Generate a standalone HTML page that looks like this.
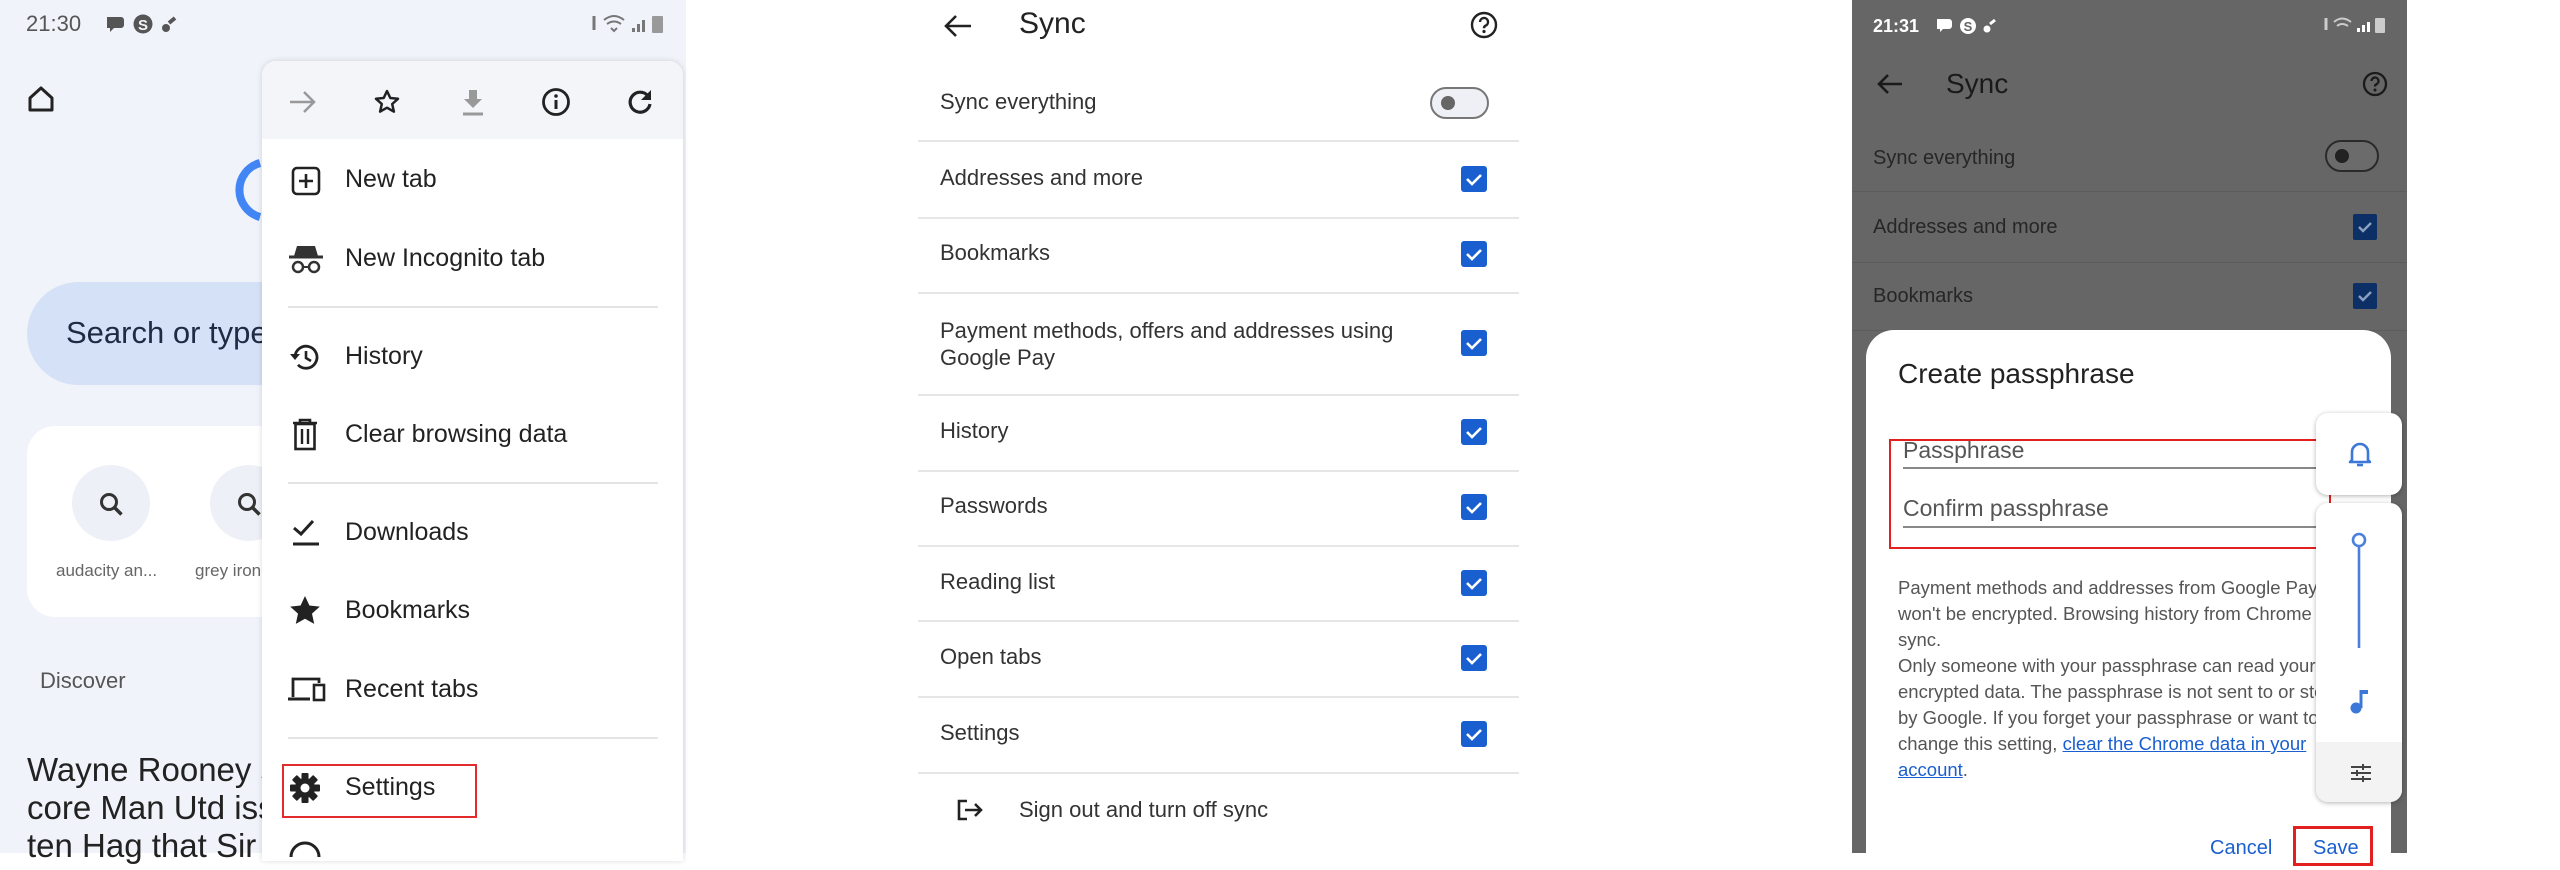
<!DOCTYPE html>
<html><head><meta charset="utf-8"><style>
*{margin:0;padding:0;box-sizing:border-box}
body{width:2560px;height:853px;overflow:hidden;background:#fff;font-family:"Liberation Sans",sans-serif;position:relative}
.a{position:absolute;white-space:nowrap;line-height:1}
svg{position:absolute;overflow:visible}
</style></head><body>

<!-- PANEL 1 -->
<div class="a" style="left:0;top:0;width:686px;height:853px;background:#f0f3fa"></div>
<div class="a" style="left:26px;top:13px;font-size:22px;color:#555">21:30</div>
<svg style="left:105px;top:14px" width="80" height="22"><path d="M2 3h14a3 3 0 0 1 3 3v5a3 3 0 0 1-3 3H9l-4 4v-4H2z" fill="#555"/><circle cx="38" cy="10" r="9.5" fill="#555"/><text x="38" y="16" font-size="15" fill="#f0f3fa" text-anchor="middle" font-family="Liberation Sans" font-weight="bold">S</text><circle cx="61" cy="14" r="4" fill="#555"/><path d="M64 9l6-5" stroke="#555" stroke-width="4"/></svg>
<svg style="left:590px;top:12px" width="80" height="24"><path d="M4 4v14" stroke="#777" stroke-width="3"/><path d="M14 8q10-8 20 0M17 12q7-5 14 0M21 16l3 3 3-3" stroke="#777" stroke-width="2" fill="none"/><path d="M42 20h3v-4h-3zM47 20h3v-8h-3zM52 20h3v-12h-3z" fill="#777"/><rect x="62" y="4" width="11" height="17" rx="1" fill="#999"/></svg>
<svg style="left:26px;top:84px" width="30" height="30"><path d="M4 14L15 4l11 10v12H4z" fill="none" stroke="#222" stroke-width="3" stroke-linejoin="round"/></svg>
<svg style="left:230px;top:160px" width="40" height="60"><path d="M30 3a28 28 0 0 0 0 54" fill="none" stroke="#4285f4" stroke-width="8"/></svg>
<div class="a" style="left:27px;top:282px;width:320px;height:103px;border-radius:52px;background:#d5e1f6"></div>
<div class="a" style="left:66px;top:317px;font-size:31px;color:#1f2a44">Search or type</div>
<div class="a" style="left:27px;top:426px;width:320px;height:191px;border-radius:28px;background:#fff"></div>
<div class="a" style="left:72px;top:465px;width:78px;height:76px;border-radius:50%;background:#edf0f6"></div>
<div class="a" style="left:210px;top:465px;width:78px;height:76px;border-radius:50%;background:#edf0f6"></div>
<svg style="left:98px;top:491px" width="28" height="28"><circle cx="11" cy="11" r="7.5" fill="none" stroke="#333" stroke-width="3"/><path d="M16.5 16.5l7 7" stroke="#333" stroke-width="3.5"/></svg>
<svg style="left:236px;top:491px" width="28" height="28"><circle cx="11" cy="11" r="7.5" fill="none" stroke="#333" stroke-width="3"/><path d="M16.5 16.5l7 7" stroke="#333" stroke-width="3.5"/></svg>
<div class="a" style="left:56px;top:562px;font-size:17px;color:#666">audacity an...</div>
<div class="a" style="left:195px;top:562px;font-size:17px;color:#666">grey iron</div>
<div class="a" style="left:40px;top:670px;font-size:22px;color:#555">Discover</div>
<div class="a" style="left:27px;top:751px;font-size:33px;color:#222;line-height:38px">Wayne Rooney s<br>core Man Utd iss<br>ten Hag that Sir</div>

<!-- menu -->
<div class="a" style="left:262px;top:61px;width:421px;height:800px;background:#fff;border-radius:14px 14px 0 0;box-shadow:0 0 6px rgba(0,0,0,.15);overflow:hidden">
 <div style="height:78px;background:#f4f5f9"></div>
</div>
<svg style="left:288px;top:89px" width="30" height="26"><path d="M2 13h24M16 3l10 10-10 10" fill="none" stroke="#999" stroke-width="2.5"/></svg>
<svg style="left:373px;top:88px" width="28" height="28"><path d="M14 3l3.3 7 7.7.8-5.8 5.2 1.7 7.6L14 19.7l-6.9 3.9 1.7-7.6L3 10.8l7.7-.8z" fill="none" stroke="#222" stroke-width="2.5" stroke-linejoin="round"/></svg>
<svg style="left:460px;top:88px" width="26" height="28"><path d="M9 2h8v9h5l-9 9-9-9h5z" fill="#999"/><path d="M3 26h20" stroke="#999" stroke-width="3"/></svg>
<svg style="left:541px;top:87px" width="30" height="30"><circle cx="15" cy="15" r="12.5" fill="none" stroke="#222" stroke-width="2.8"/><path d="M15 13v9" stroke="#222" stroke-width="3"/><circle cx="15" cy="9" r="1.8" fill="#222"/></svg>
<svg style="left:626px;top:88px" width="28" height="28"><path d="M22 8A10 10 0 1 0 24 16" fill="none" stroke="#222" stroke-width="3.2"/><path d="M25 2v10H15z" fill="#222"/></svg>

<svg style="left:291px;top:166px" width="30" height="30"><rect x="2" y="2" width="26" height="26" rx="4" fill="none" stroke="#222" stroke-width="2.6"/><path d="M15 8v14M8 15h14" stroke="#222" stroke-width="2.6"/></svg>
<div class="a" style="left:345px;top:167px;font-size:25px;color:#222">New tab</div>
<svg style="left:288px;top:244px" width="36" height="30"><path d="M9 2h18l3 10H6z" fill="#333"/><path d="M1 13h34" stroke="#333" stroke-width="3"/><circle cx="10" cy="23" r="5" fill="none" stroke="#333" stroke-width="2.5"/><circle cx="26" cy="23" r="5" fill="none" stroke="#333" stroke-width="2.5"/><path d="M15 23h6" stroke="#333" stroke-width="2"/></svg>
<div class="a" style="left:345px;top:246px;font-size:25px;color:#222">New Incognito tab</div>
<div class="a" style="left:288px;top:306px;width:370px;height:2px;background:#e4e4e4"></div>
<svg style="left:289px;top:342px" width="32" height="30"><path d="M6 15A11 11 0 1 1 9 22.8" fill="none" stroke="#222" stroke-width="2.8"/><path d="M1 12l5 6 5-6z" fill="#222"/><path d="M17 9v7l5 3" fill="none" stroke="#222" stroke-width="2.6"/></svg>
<div class="a" style="left:345px;top:344px;font-size:25px;color:#222">History</div>
<svg style="left:292px;top:419px" width="26" height="32"><path d="M1 4h24M8 4V1h10v3" stroke="#222" stroke-width="2.6" fill="none"/><rect x="3.5" y="5" width="19" height="25" fill="none" stroke="#222" stroke-width="2.6"/><path d="M10 10v15M16 10v15" stroke="#222" stroke-width="2.4"/></svg>
<div class="a" style="left:345px;top:422px;font-size:25px;color:#222">Clear browsing data</div>
<div class="a" style="left:288px;top:482px;width:370px;height:2px;background:#e4e4e4"></div>
<svg style="left:291px;top:518px" width="30" height="30"><path d="M3 10l7 6 12-13" fill="none" stroke="#222" stroke-width="3"/><path d="M2 26h26" stroke="#222" stroke-width="3"/></svg>
<div class="a" style="left:345px;top:520px;font-size:25px;color:#222">Downloads</div>
<svg style="left:289px;top:595px" width="32" height="30"><path d="M16 1l4.4 9.5 10.4 1.1-7.8 7 2.2 10.3L16 23.7l-9.2 5.2L9 18.6l-7.8-7 10.4-1.1z" fill="#222"/></svg>
<div class="a" style="left:345px;top:598px;font-size:25px;color:#222">Bookmarks</div>
<svg style="left:287px;top:675px" width="40" height="30"><path d="M6 22V4h26v4" fill="none" stroke="#222" stroke-width="2.8"/><path d="M1 24h22" stroke="#222" stroke-width="3"/><rect x="27" y="10" width="10" height="15" fill="none" stroke="#222" stroke-width="2.6"/></svg>
<div class="a" style="left:345px;top:677px;font-size:25px;color:#222">Recent tabs</div>
<div class="a" style="left:288px;top:737px;width:370px;height:2px;background:#e4e4e4"></div>
<svg style="left:289px;top:772px" width="32" height="32"><g transform="translate(16 16)" fill="#222"><circle r="10"/><g id="t"><rect x="-3.5" y="-15" width="7" height="30" rx="1"/></g><use href="#t" transform="rotate(45)"/><use href="#t" transform="rotate(90)"/><use href="#t" transform="rotate(135)"/><circle r="4.5" fill="#fff"/></g></svg>
<div class="a" style="left:345px;top:775px;font-size:25px;color:#222">Settings</div>
<div class="a" style="left:282px;top:764px;width:195px;height:54px;border:2px solid #e32b2b"></div>
<svg style="left:288px;top:845px" width="34" height="20"><path d="M3 12a14 14 0 0 1 28 0" fill="none" stroke="#222" stroke-width="3"/></svg>

<!-- PANEL 2 -->
<svg style="left:943px;top:14px" width="30" height="24"><path d="M28 12H3M13 2L3 12l10 10" fill="none" stroke="#222" stroke-width="2.6"/></svg>
<div class="a" style="left:1019px;top:9px;font-size:30px;color:#222">Sync</div>
<svg style="left:1470px;top:11px" width="28" height="28"><circle cx="14" cy="14" r="12" fill="none" stroke="#222" stroke-width="2.4"/><path d="M10 11a4 4 0 1 1 5.5 3.7c-1 .5-1.5 1.2-1.5 2.5" fill="none" stroke="#222" stroke-width="2.4"/><circle cx="14" cy="20.5" r="1.6" fill="#222"/></svg>
<div class="a" style="left:940px;top:91px;font-size:22px;color:#333">Sync everything</div>
<div class="a" style="left:1430px;top:87px;width:59px;height:32px;border-radius:16px;border:2.5px solid #777;background:#eef0f5"></div>
<div class="a" style="left:1441px;top:96px;width:14px;height:14px;border-radius:50%;background:#666"></div>

<div class="a" style="left:918px;top:140px;width:601px;height:2px;background:#e6e6e6"></div>
<div class="a" style="left:918px;top:217px;width:601px;height:2px;background:#e6e6e6"></div>
<div class="a" style="left:918px;top:292px;width:601px;height:2px;background:#e6e6e6"></div>
<div class="a" style="left:918px;top:394px;width:601px;height:2px;background:#e6e6e6"></div>
<div class="a" style="left:918px;top:470px;width:601px;height:2px;background:#e6e6e6"></div>
<div class="a" style="left:918px;top:545px;width:601px;height:2px;background:#e6e6e6"></div>
<div class="a" style="left:918px;top:620px;width:601px;height:2px;background:#e6e6e6"></div>
<div class="a" style="left:918px;top:696px;width:601px;height:2px;background:#e6e6e6"></div>
<div class="a" style="left:918px;top:772px;width:601px;height:2px;background:#e6e6e6"></div>

<div class="a" style="left:940px;top:167px;font-size:22px;color:#333">Addresses and more</div>
<div class="a" style="left:940px;top:242px;font-size:22px;color:#333">Bookmarks</div>
<div class="a" style="left:940px;top:319px;font-size:22px;color:#333;line-height:27px;top:317px">Payment methods, offers and addresses using<br>Google Pay</div>
<div class="a" style="left:940px;top:420px;font-size:22px;color:#333">History</div>
<div class="a" style="left:940px;top:495px;font-size:22px;color:#333">Passwords</div>
<div class="a" style="left:940px;top:571px;font-size:22px;color:#333">Reading list</div>
<div class="a" style="left:940px;top:646px;font-size:22px;color:#333">Open tabs</div>
<div class="a" style="left:940px;top:722px;font-size:22px;color:#333">Settings</div>

<svg style="left:0;top:0" width="2560" height="853">
<defs><g id="cb"><rect x="-13" y="-13" width="26" height="26" rx="3" fill="#1a5fd0"/><path d="M-7 0l5 5 9-9" fill="none" stroke="#fff" stroke-width="2.6"/></g>
<g id="cb2"><rect x="-12" y="-13" width="24" height="26" rx="2" fill="#0c2f66"/><path d="M-6 0l4 4 8-8" fill="none" stroke="#8aa0c0" stroke-width="2.4"/></g></defs>
<use href="#cb" x="1474" y="179"/><use href="#cb" x="1474" y="254"/><use href="#cb" x="1474" y="343"/><use href="#cb" x="1474" y="432"/><use href="#cb" x="1474" y="507"/><use href="#cb" x="1474" y="583"/><use href="#cb" x="1474" y="658"/><use href="#cb" x="1474" y="734"/>
</svg>
<svg style="left:956px;top:798px" width="28" height="24"><path d="M11 3H3v18h8" fill="none" stroke="#222" stroke-width="2.6"/><path d="M9 12h16M19 6l6 6-6 6" fill="none" stroke="#222" stroke-width="2.6"/></svg>
<div class="a" style="left:1019px;top:799px;font-size:22px;color:#333">Sign out and turn off sync</div>

<!-- PANEL 3 -->
<div class="a" style="left:1852px;top:0;width:555px;height:853px;background:#666"></div>
<div class="a" style="left:1873px;top:17px;font-size:18px;color:#fff;font-weight:bold">21:31</div>
<svg style="left:1935px;top:16px" width="70" height="20"><path d="M2 3h12a3 3 0 0 1 3 3v4a3 3 0 0 1-3 3H8l-3 3v-3H2z" fill="#fff"/><circle cx="33" cy="10" r="8" fill="#fff"/><text x="33" y="15" font-size="13" fill="#666" text-anchor="middle" font-family="Liberation Sans" font-weight="bold">S</text><circle cx="52" cy="13" r="3.5" fill="#fff"/><path d="M55 8l5-4" stroke="#fff" stroke-width="3"/></svg>
<svg style="left:2322px;top:15px" width="70" height="20"><path d="M4 3v12" stroke="#ccc" stroke-width="3"/><path d="M12 7q8-7 17 0M15 11q5-4 11 0" stroke="#ccc" stroke-width="2" fill="none"/><path d="M35 17h3v-4h-3zM40 17h3v-7h-3zM45 17h3v-10h-3z" fill="#fff"/><rect x="53" y="3" width="10" height="15" rx="1" fill="#ccc"/></svg>
<svg style="left:1876px;top:73px" width="28" height="22"><path d="M26 11H3M12 2L3 11l9 9" fill="none" stroke="#1a1a1a" stroke-width="2.6"/></svg>
<div class="a" style="left:1946px;top:70px;font-size:28px;color:#1a1a1a">Sync</div>
<svg style="left:2362px;top:71px" width="26" height="26"><circle cx="13" cy="13" r="11" fill="none" stroke="#1a1a1a" stroke-width="2.3"/><path d="M9.5 10a3.5 3.5 0 1 1 5 3.2c-1 .5-1.5 1.1-1.5 2.3" fill="none" stroke="#1a1a1a" stroke-width="2.3"/><circle cx="13" cy="19" r="1.5" fill="#1a1a1a"/></svg>
<div class="a" style="left:1873px;top:148px;font-size:20px;color:#262626">Sync everything</div>
<div class="a" style="left:2325px;top:140px;width:54px;height:32px;border-radius:16px;border:2.5px solid #2a2a2a;background:#6b6b6b"></div>
<div class="a" style="left:2335px;top:149px;width:14px;height:14px;border-radius:50%;background:#222"></div>
<div class="a" style="left:1852px;top:191px;width:555px;height:1px;background:#5c5c5c"></div>
<div class="a" style="left:1852px;top:262px;width:555px;height:1px;background:#5c5c5c"></div>
<div class="a" style="left:1852px;top:330px;width:555px;height:1px;background:#5c5c5c"></div>
<div class="a" style="left:1873px;top:217px;font-size:20px;color:#262626">Addresses and more</div>
<div class="a" style="left:1873px;top:286px;font-size:20px;color:#262626">Bookmarks</div>
<svg style="left:0;top:0" width="2560" height="853"><use href="#cb2" x="2365" y="227"/><use href="#cb2" x="2365" y="296"/></svg>

<div class="a" style="left:1866px;top:330px;width:525px;height:540px;background:#fff;border-radius:28px 28px 0 0"></div>
<div class="a" style="left:1898px;top:360px;font-size:28px;color:#222">Create passphrase</div>
<div class="a" style="left:1903px;top:439px;font-size:23px;color:#555">Passphrase</div>
<div class="a" style="left:1903px;top:467px;width:414px;height:2px;background:#888"></div>
<div class="a" style="left:1903px;top:497px;font-size:23px;color:#555">Confirm passphrase</div>
<div class="a" style="left:1903px;top:526px;width:414px;height:2px;background:#888"></div>
<div class="a" style="left:1889px;top:439px;width:442px;height:110px;border:2.5px solid #e32020"></div>
<div class="a" style="left:1898px;top:575px;width:420px;overflow:hidden;font-size:18.5px;color:#555;line-height:26px;white-space:nowrap">Payment methods and addresses from Google Pay<br>won't be encrypted. Browsing history from Chrome will<br>sync.<br>Only someone with your passphrase can read your<br>encrypted data. The passphrase is not sent to or stored<br>by Google. If you forget your passphrase or want to<br>change this setting, <span style="color:#1a5fd0;text-decoration:underline">clear the Chrome data in your</span><br><span style="color:#1a5fd0;text-decoration:underline">account</span>.</div>

<div class="a" style="left:2316px;top:413px;width:86px;height:82px;background:#fff;border-radius:12px;box-shadow:0 1px 5px rgba(0,0,0,.3)"></div>
<svg style="left:2347px;top:440px" width="26" height="28"><path d="M5 20V12a8 8 0 0 1 16 0v8l2 2H3z" fill="none" stroke="#3c78d8" stroke-width="2.6" stroke-linejoin="round"/><path d="M10 25h6" stroke="#3c78d8" stroke-width="2.6"/></svg>
<div class="a" style="left:2316px;top:503px;width:86px;height:299px;background:#fff;border-radius:12px;box-shadow:0 1px 5px rgba(0,0,0,.3);overflow:hidden"><div style="position:absolute;left:0;bottom:0;width:86px;height:60px;background:#f3f3f3"></div></div>
<svg style="left:2346px;top:532px" width="26" height="120"><circle cx="13" cy="8" r="6" fill="none" stroke="#4a80dc" stroke-width="2.6"/><path d="M13 14v102" stroke="#4a80dc" stroke-width="2.6"/></svg>
<svg style="left:2348px;top:688px" width="24" height="28"><path d="M13 2v18" stroke="#3c78d8" stroke-width="3"/><circle cx="8" cy="20" r="5.5" fill="#3c78d8"/><path d="M13 2h7v4h-7z" fill="#3c78d8"/></svg>
<svg style="left:2350px;top:763px" width="22" height="20"><path d="M1 4h20M1 10h20M1 16h20" stroke="#444" stroke-width="2"/><path d="M13 1v6M7 7v6M13 13v6" stroke="#444" stroke-width="2"/></svg>
<div class="a" style="left:2210px;top:838px;font-size:20px;color:#1a5fd0">Cancel</div>
<div class="a" style="left:2293px;top:826px;width:80px;height:40px;border:3px solid #e32020"></div>
<div class="a" style="left:2313px;top:838px;font-size:20px;color:#1a5fd0">Save</div>
</body></html>
